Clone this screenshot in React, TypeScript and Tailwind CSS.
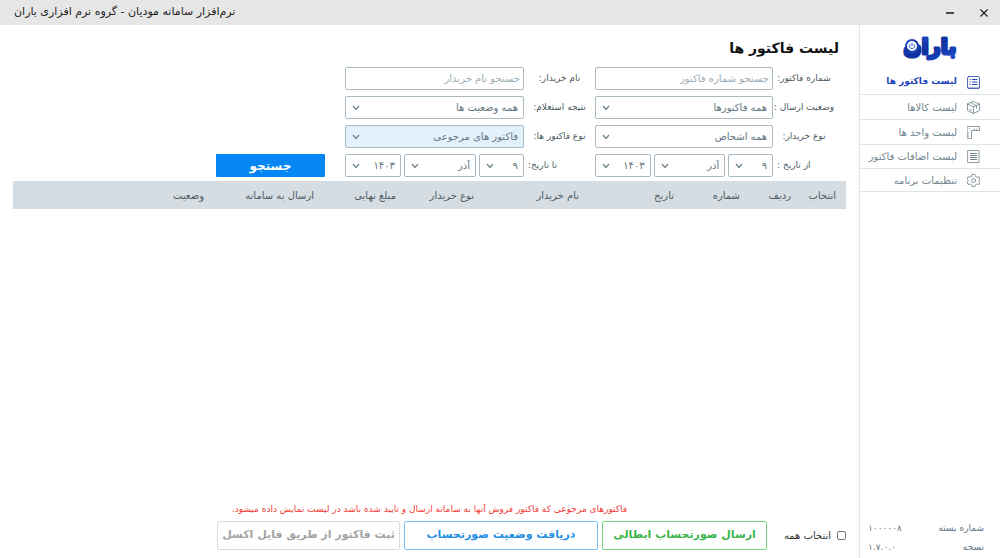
import type { ReactNode } from "react";
import clsx from "clsx";

const columns = [
  { title: "انتخاب", width: "w-[45px]" },
  { title: "ردیف", width: "w-[51px]" },
  { title: "شماره", width: "w-[66px]" },
  { title: "تاریخ", width: "w-[95px]" },
  { title: "نام خریدار", width: "w-[105px]" },
  { title: "نوع خریدار", width: "w-[78px]" },
  { title: "مبلغ نهایی", width: "w-[82px]" },
  { title: "ارسال به سامانه", width: "w-[110px]" },
  { title: "وضعیت", width: "" },
];

function Icon({ children }: { children: ReactNode }) {
  return (
    <svg
      viewBox="0 0 26 26"
      className="size-[13px] shrink-0"
      fill="none"
      stroke="currentColor"
      strokeWidth="1.6"
      strokeLinecap="round"
      strokeLinejoin="round"
    >
      {children}
    </svg>
  );
}

const InvoiceIcon = () => (
  <Icon>
    <path d="M4 1h18a3 3 0 0 1 3 3v18l-1 3H2l-1-3V4a3 3 0 0 1 3-3z" />
    <path d="M11 7h9M11 12h9M11 17h9M6 7h.5M6 12h.5M6 17h.5" strokeWidth="2.2" />
    <path d="M1 22l3 2 3-2 3 2 3-2 3 2 3-2 3 2 3-2" strokeWidth="1" />
  </Icon>
);

const BoxIcon = () => (
  <Icon>
    <path d="M13 1l12 5v13l-12 6-12-6V6zM1 6l12 6 12-6M13 12v13" />
    <path d="M7 3.500l12 6v5M5 17l4 2" />
  </Icon>
);

const RulerIcon = () => (
  <Icon>
    <path d="M1 1h24v8H9v16H1z" />
    <path d="M14 9V6M20 9V6M1 14h3M1 20h3M5 5h.5" />
  </Icon>
);

const ExtrasIcon = () => (
  <Icon>
    <path d="M2 1h22v24H2z" />
    <path d="M7 7h12M7 11h12M7 15h12M7 19h12" strokeWidth="2" />
  </Icon>
);

const SettingsIcon = () => (
  <Icon>
    <path d="M10 1h6l1 4 3 1.500 4-1 2 5-3 2.500 3 3-2 5-4-1-3 1.500-1 3.500h-6l-1-3.500L6 20l-4 1-2-5 3-3-3-2.500 2-5 4 1L9 5z" />
    <circle cx="13" cy="13" r="4" />
  </Icon>
);

const menu = [
  { title: "لیست فاکتور ها", icon: <InvoiceIcon />, active: true, height: "h-[25px]" },
  { title: "لیست کالاها", icon: <BoxIcon />, height: "h-[25px]" },
  { title: "لیست واحد ها", icon: <RulerIcon />, height: "h-[25px]" },
  { title: "لیست اضافات فاکتور", icon: <ExtrasIcon />, height: "h-[24px]" },
  { title: "تنظیمات برنامه", icon: <SettingsIcon />, height: "h-[23px]" },
];

function Logo() {
  return (
    <svg viewBox="0 0 70 40" className="h-10 w-[70px]" role="img" aria-label="باران">
      <defs>
        <linearGradient id="ink" x1="0" x2="1" y1="0" y2="1">
          <stop offset="0" stopColor="#2a55d8" />
          <stop offset="0.5" stopColor="#0d2f9c" />
          <stop offset="1" stopColor="#1f4fd0" />
        </linearGradient>
      </defs>
      <text
        x="35"
        y="25"
        textAnchor="middle"
        fontSize="21"
        fontWeight="bold"
        fill="url(#ink)"
        stroke="url(#ink)"
        strokeWidth="3"
        strokeLinejoin="round"
        strokeLinecap="round"
      >
        باران
      </text>
      <circle cx="17" cy="17" r="6" fill="#fff" stroke="url(#ink)" strokeWidth="2" />
      <path d="M15 15.500a2.600 2.600 0 1 0 4 0M17 14v3" fill="none" stroke="#3a66d8" strokeLinecap="round" />
    </svg>
  );
}

interface SelectProps {
  id: string;
  value: string;
  label?: string;
  className?: string;
  highlight?: boolean;
}

function Select({ id, value, label, className, highlight }: SelectProps) {
  return (
    <div className={clsx("relative", className)}>
      <select
        id={id}
        aria-label={label}
        className={clsx(
          "block h-[23px] w-full appearance-none rounded-[2px] border border-[#a9bac3] ps-[5px] pe-5 text-[10px] leading-[20px] text-[#64767f]",
          highlight ? "bg-[#e3f1fd]" : "bg-white"
        )}
      >
        <option>{value}</option>
      </select>
      <svg
        viewBox="0 0 8 6"
        className="pointer-events-none absolute end-[7px] top-[9px] h-[6px] w-2"
        fill="none"
        stroke="#72848d"
        strokeWidth="1.3"
      >
        <path d="M1 1l3 3.500L7 1" />
      </svg>
    </div>
  );
}

function TextField({ id, placeholder }: { id: string; placeholder: string }) {
  return (
    <input
      id={id}
      type="text"
      placeholder={placeholder}
      className="block h-[23px] w-full rounded-[2px] border border-[#a9bac3] bg-white px-[3px] text-[10px] text-[#64767f] placeholder:text-[#9aabb4]"
    />
  );
}

function DateField({ id, name }: { id: string; name: string }) {
  return (
    <div className="flex gap-[3px]">
      <Select id={id} value="۹" className="flex-[45]" />
      <Select id={id + "-month"} label={name + " ماه"} value="آذر" className="flex-[72]" />
      <Select id={id + "-year"} label={name + " سال"} value="۱۴۰۳" className="flex-[56]" />
    </div>
  );
}

function Label({ htmlFor, children, end }: { htmlFor: string; children: ReactNode; end?: boolean }) {
  return (
    <label
      htmlFor={htmlFor}
      className={clsx("text-[9px] whitespace-nowrap text-[#4c5b63]", end ? "px-1 text-end" : "text-center")}
    >
      {children}
    </label>
  );
}

function Sidebar() {
  return (
    <aside className="flex w-[141px] shrink-0 flex-col border-e border-[#dfe6ea]">
      <div className="flex h-[45px] justify-center pt-1">
        <Logo />
      </div>
      <nav>
        {menu.map((item) => (
          <a
            key={item.title}
            href="#"
            className={clsx(
              "flex items-center gap-2.5 border-b border-[#dde5e9] ps-5 whitespace-nowrap",
              item.height,
              item.active ? "text-[9px] font-bold text-[#2344b8]" : "text-[10px] text-[#71848d]"
            )}
          >
            {item.icon}
            {item.title}
          </a>
        ))}
      </nav>
      <dl className="mt-auto flex flex-col gap-[5px] ps-4 pe-2 pb-1 text-[9px] leading-[14px] text-[#64767f]">
        <div className="flex justify-between">
          <dt>شماره بسته</dt>
          <dd>۱۰۰۰۰۰۸</dd>
        </div>
        <div className="flex justify-between">
          <dt>نسخه</dt>
          <dd>۱.۷.۰.۰</dd>
        </div>
      </dl>
    </aside>
  );
}

function Filters() {
  return (
    <form className="grid grid-cols-[62px_178fr_71px_179fr_332fr] items-center gap-y-[6px] ps-[11px]">
      <Label htmlFor="invoice-number">شماره فاکتور:</Label>
      <TextField id="invoice-number" placeholder="جستجو شماره فاکتور" />
      <Label htmlFor="buyer-name">نام خریدار:</Label>
      <TextField id="buyer-name" placeholder="جستجو نام خریدار" />
      <span />

      <Label htmlFor="send-status">وضعیت ارسال :</Label>
      <Select id="send-status" value="همه فاکتورها" />
      <Label htmlFor="inquiry">نتیجه استعلام:</Label>
      <Select id="inquiry" value="همه وضعیت ها" />
      <span />

      <Label htmlFor="buyer-type">نوع خریدار:</Label>
      <Select id="buyer-type" value="همه اشخاص" />
      <Label htmlFor="invoice-type">نوع فاکتور ها:</Label>
      <Select id="invoice-type" value="فاکتور های مرجوعی" highlight />
      <span />

      <Label htmlFor="from" end>
        از تاریخ :
      </Label>
      <DateField id="from" name="از" />
      <Label htmlFor="to" end>
        تا تاریخ:
      </Label>
      <DateField id="to" name="تا" />
      <button type="button" className="ms-5 h-[23px] w-[109px] rounded-[1px] bg-[#0487f5] text-[12px] font-bold text-white">
        جستجو
      </button>
    </form>
  );
}

function Actions() {
  const button = "h-[29px] min-w-0 rounded-[2px] border bg-white text-[11px] font-bold whitespace-nowrap";
  return (
    <footer className="mt-auto pb-2">
      <p className="mb-1 text-center text-[9px] leading-[16px] text-[#f03a35]">
        فاکتورهای مرجوعی که فاکتور فروش آنها به سامانه ارسال و تایید شده باشد در لیست نمایش داده میشود.
      </p>
      <div className="flex items-center gap-1">
        <label className="flex w-[75px] shrink-0 items-center gap-1.5 text-[10px] whitespace-nowrap text-[#333]">
          <input type="checkbox" className="size-[9px] appearance-none rounded-[2px] border border-[#777] bg-white checked:bg-[#0487f5]" />
          انتخاب همه
        </label>
        <button type="button" className={clsx(button, "flex-[165] border-[#79d67f] text-[#3cb54a]")}>
          ارسال صورتحساب ابطالی
        </button>
        <button type="button" className={clsx(button, "flex-[195] border-[#7cc1f7] text-[#1f8fe5]")}>
          دریافت وضعیت صورتحساب
        </button>
        <button type="button" className={clsx(button, "flex-[183] border-[#dcdcdc] text-[#a3a3a3]")}>
          ثبت فاکتور از طریق فایل اکسل
        </button>
        <div className="flex-[203]" />
      </div>
    </footer>
  );
}

export default function App() {
  return (
    <div dir="rtl" className="flex min-h-screen flex-col bg-white font-['DejaVu_Sans',sans-serif]">
      <header className="flex h-[25px] items-center bg-[#e6e6e6] ps-3 pe-3.5 text-[#222]">
        <button type="button" aria-label="بستن">
          <svg viewBox="0 0 8 8" className="size-2" stroke="currentColor" strokeWidth="1.2">
            <path d="M0.500 0.500l7 7M7.500 0.500l-7 7" />
          </svg>
        </button>
        <button type="button" aria-label="کوچک کردن" className="ms-[26px]">
          <svg viewBox="0 0 8 8" className="size-2" stroke="currentColor" strokeWidth="1.600">
            <path d="M0 4h8" />
          </svg>
        </button>
        <span className="ms-auto text-[11px]">نرم‌افزار سامانه مودیان - گروه نرم افزاری باران</span>
      </header>
      <div className="flex grow">
        <Sidebar />
        <main className="flex min-w-0 grow flex-col px-[13px]">
          <h1 className="mt-2.5 mb-1.5 ps-[7px] text-[14px] leading-[26px] font-bold text-[#111]">لیست فاکتور ها</h1>
          <Filters />
          <table className="mt-1 w-full table-fixed text-[10px] text-[#4c5b63]">
            <thead>
              <tr className="h-7 bg-[#d5dde2]">
                {columns.map((c) => (
                  <th key={c.title} className={clsx("ps-[10px] text-start font-normal whitespace-nowrap", c.width)}>
                    {c.title}
                  </th>
                ))}
              </tr>
            </thead>
          </table>
          <Actions />
        </main>
      </div>
    </div>
  );
}
